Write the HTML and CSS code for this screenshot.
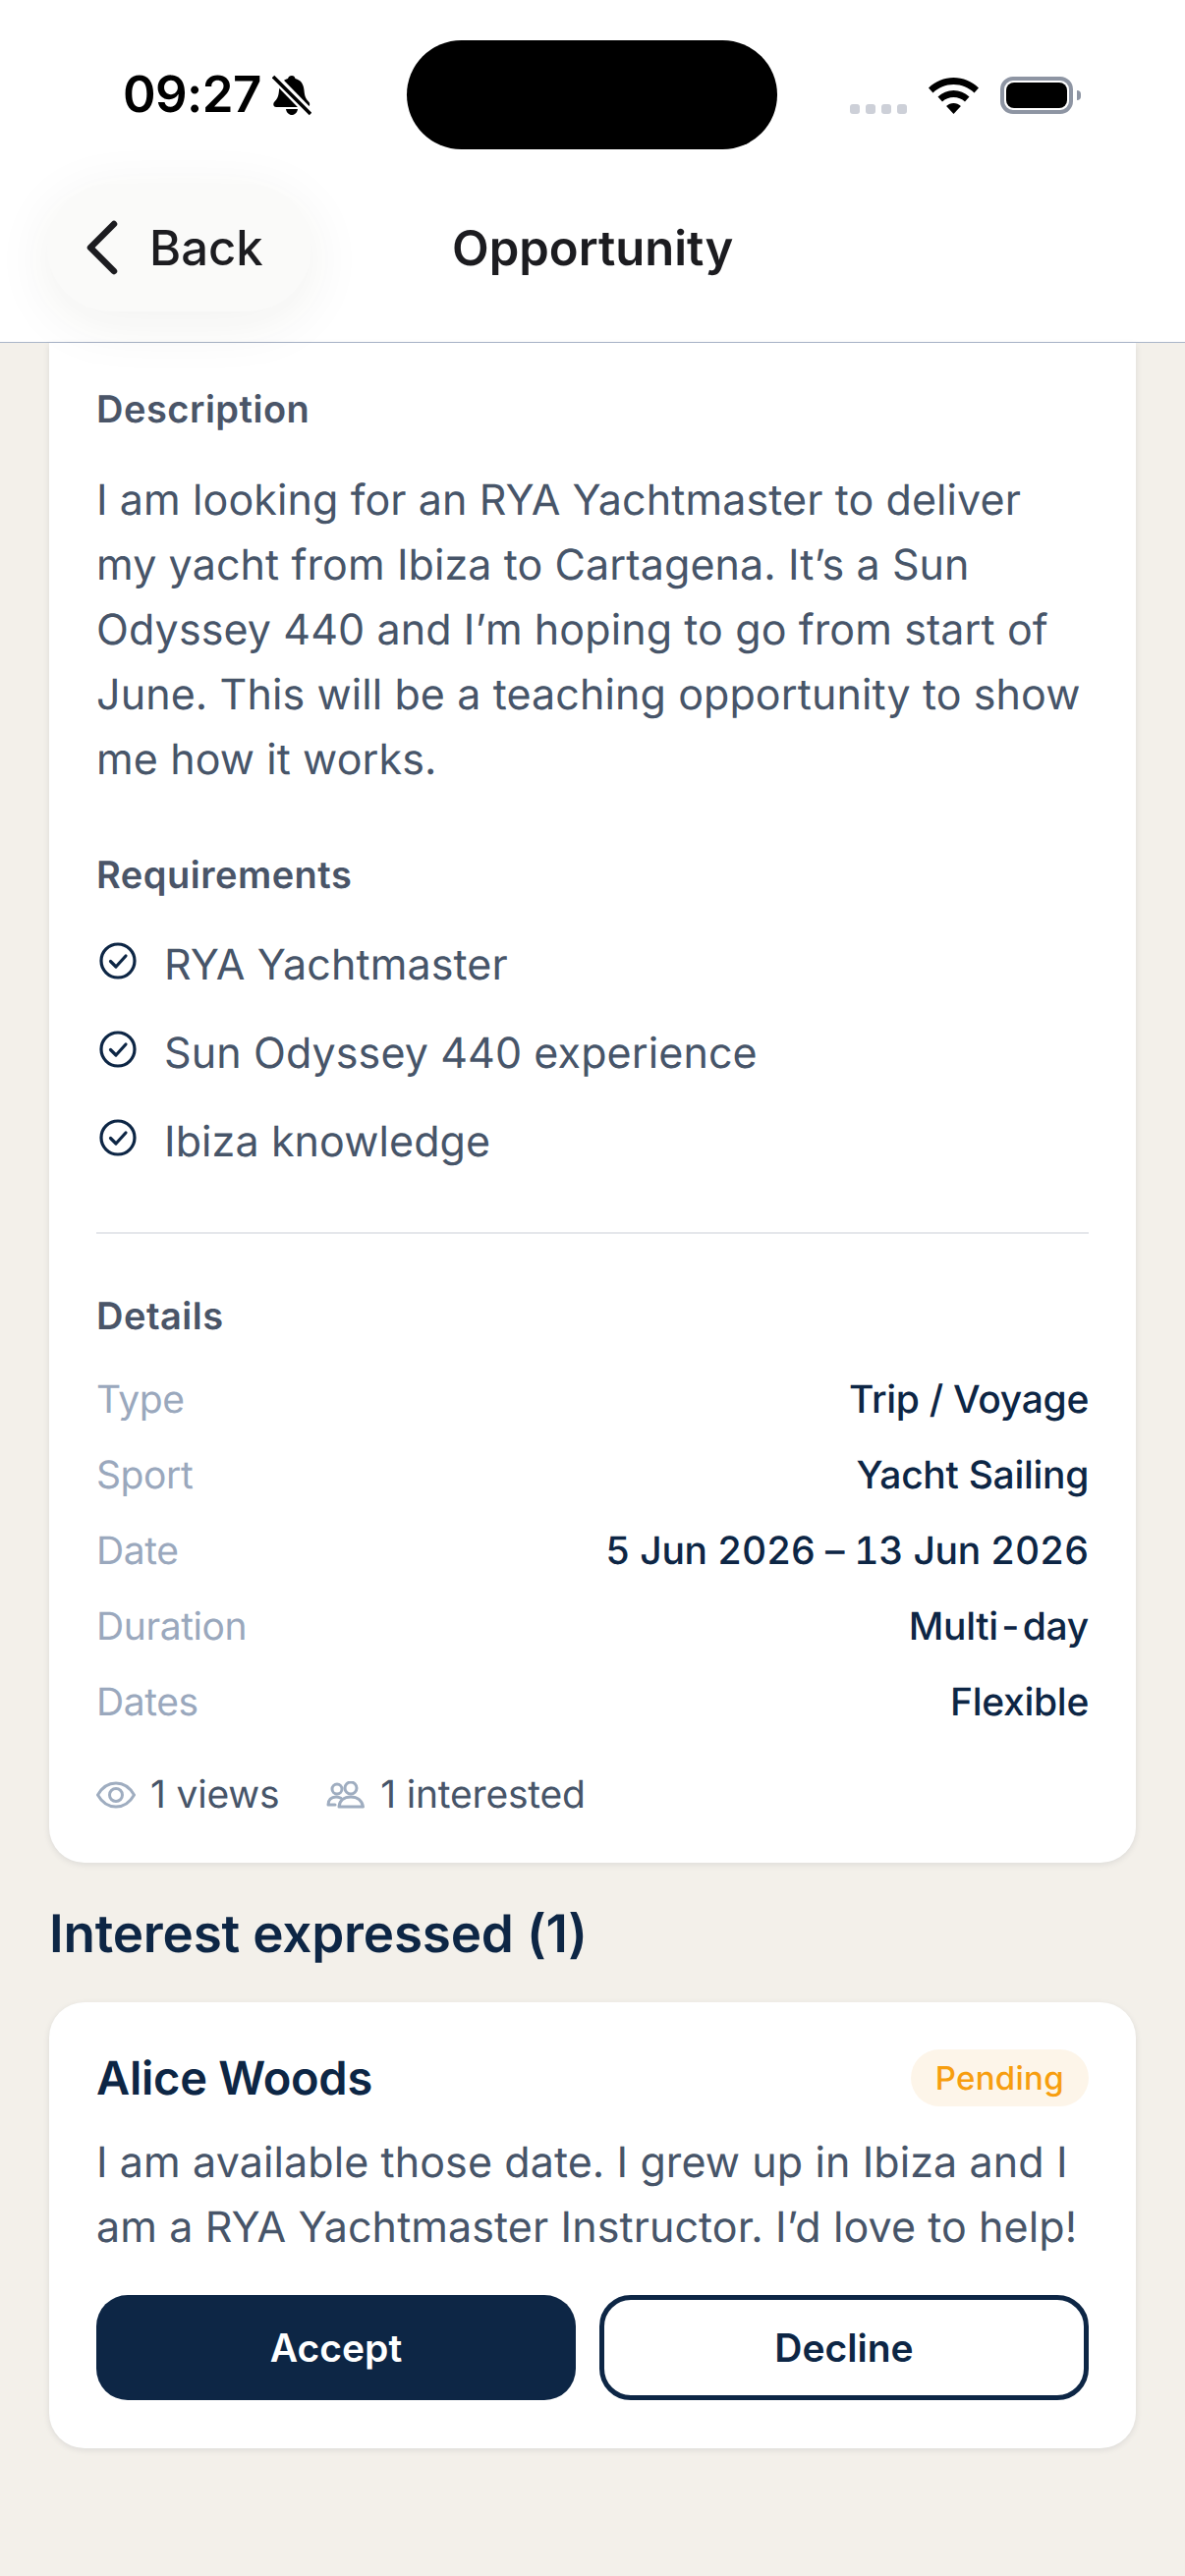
FILE: index.html
```html
<!DOCTYPE html>
<html lang="en">
<head>
    <meta charset="UTF-8">
    <meta name="viewport" content="width=device-width, initial-scale=1.0">
    <title>Opportunity</title>
    <link rel="stylesheet" href="styles.css">
</head>
<body>
    <!-- Status bar and title -->
    <header class="top">
        <div class="status-bar">
            <div class="status-left">
                <span class="clock">09:27</span>
                <svg class="bell" viewBox="0 0 40 42">
                    <path d="M20 1c2 0 3 1 3.500 3 6 1.500 8.500 6 9 12 .4 6 2 9 5 12 1.500 2 .5 5-2 5H4c-2.500 0-3.500-3-2-5 3-3 4.600-6 5-12 .5-6 3-10.500 9-12C16.500 2 18 1 20 1z"/>
                    <path d="M14 35h12c-.5 3.500-3 6-6 6s-5.500-2.500-6-6z"/>
                    <path class="bell-cut" d="M1 1l38 39" />
                    <path class="bell-line" d="M1 2l38 38" />
                </svg>
            </div>
            <div class="island"></div>
            <div class="status-right">
                <div class="signal"><i></i><i></i><i></i><i></i></div>
                <svg class="wifi" viewBox="0 0 51 37">
                    <path d="M25.500 0C35 0 44 3.800 51 10.500l-4.500 5C41 10.200 33.500 7 25.500 7S10 10.200 4.500 15.500L0 10.500C7 3.800 16 0 25.500 0z"/>
                    <path d="M25.500 13c6 0 11.500 2.300 16 6.500L37 24.500c-3-2.900-7.200-4.500-11.500-4.500S17 21.600 14 24.500l-4.500-5C14 15.300 19.500 13 25.500 13z"/>
                    <path d="M25.500 26c2.800 0 5.300 1 7.400 2.900L25.500 37l-7.400-8.100c2.100-1.900 4.600-2.900 7.400-2.900z"/>
                </svg>
                <div class="battery"><div class="battery-fill"></div></div>
            </div>
        </div>
        <div class="nav-row">
            <button class="back-btn">
                <svg class="chevron" viewBox="0 0 34 56"><path d="M30 4L6 28l24 24"/></svg>
                <span>Back</span>
            </button>
            <h1 class="page-title">Opportunity</h1>
        </div>
    </header>

    <main class="content">
        <!-- Opportunity card -->
        <section class="card card-main">
            <h2 class="label">Description</h2>
            <p class="body-text">I am looking for an RYA Yachtmaster to deliver my yacht from Ibiza to Cartagena. It’s a Sun Odyssey 440 and I’m hoping to go from start of June. This will be a teaching opportunity to show me how it works.</p>

            <h2 class="label label-req">Requirements</h2>
            <ul class="req-list">
                <li>
                    <svg class="check" viewBox="0 0 38 38"><circle cx="19" cy="19" r="17"/><path d="M11.500 19.500l5.500 5.500 10-11"/></svg>
                    <span>RYA Yachtmaster</span>
                </li>
                <li>
                    <svg class="check" viewBox="0 0 38 38"><circle cx="19" cy="19" r="17"/><path d="M11.500 19.500l5.500 5.500 10-11"/></svg>
                    <span>Sun Odyssey 440 experience</span>
                </li>
                <li>
                    <svg class="check" viewBox="0 0 38 38"><circle cx="19" cy="19" r="17"/><path d="M11.500 19.500l5.500 5.500 10-11"/></svg>
                    <span>Ibiza knowledge</span>
                </li>
            </ul>

            <div class="divider"></div>

            <h2 class="label">Details</h2>
            <dl class="details">
                <div class="detail-row"><dt>Type</dt><dd>Trip / Voyage</dd></div>
                <div class="detail-row"><dt>Sport</dt><dd>Yacht Sailing</dd></div>
                <div class="detail-row"><dt>Date</dt><dd>5 Jun 2026 – 13 Jun 2026</dd></div>
                <div class="detail-row"><dt>Duration</dt><dd>Multi-day</dd></div>
                <div class="detail-row"><dt>Dates</dt><dd>Flexible</dd></div>
            </dl>

            <div class="stats">
                <div class="stat">
                    <svg class="stat-icon" viewBox="0 0 40 28"><path d="M1.500 14C6 6 12.500 2 20 2s14 4 18.500 12C34 22 27.500 26 20 26S6 22 1.500 14z"/><circle cx="20" cy="14" r="6.500"/></svg>
                    <span>1 views</span>
                </div>
                <div class="stat">
                    <svg class="stat-icon" viewBox="0 0 40 28"><circle cx="11" cy="8" r="5"/><circle cx="25" cy="7" r="6"/><path d="M13 26c.5-6 5-10 12-10s11.500 4 12.500 10z"/><path d="M9 24H2c0-5 3-8 8-8 2 0 3.500.4 5 1.300"/></svg>
                    <span>1 interested</span>
                </div>
            </div>
        </section>

        <h2 class="section-title">Interest expressed (1)</h2>

        <!-- Interest card -->
        <section class="card card-interest">
            <div class="interest-head">
                <span class="person">Alice Woods</span>
                <span class="badge">Pending</span>
            </div>
            <p class="body-text">I am available those date. I grew up in Ibiza and I am a RYA Yachtmaster Instructor. I’d love to help!</p>
            <div class="actions">
                <button class="btn btn-accept">Accept</button>
                <button class="btn btn-decline">Decline</button>
            </div>
        </section>
    </main>
</body>
</html>
```

FILE: styles.css
```css
/* Base */
* {
    box-sizing: border-box;
}

body {
    margin: 0;
    height: 2622px;
    overflow: hidden;
    font-family: Inter, "Liberation Sans", sans-serif;
    text-rendering: geometricPrecision;
    background-color: #f3f0ea;
    color: #475569;
}

h1, h2, p, ul, dl, dd {
    margin: 0;
    padding: 0;
}

/* Header */
.top {
    height: 349px;
    background-color: #ffffff;
    border-bottom: 1px solid #aab5c8;
}

.status-bar {
    display: grid;
    grid-template-columns: 414px 377px 1fr;
    height: 187px;
    padding-top: 41px;
}

.status-left {
    display: flex;
    align-items: center;
    gap: 11px;
    height: 110px;
    padding-left: 125px;
}

.clock {
    font-size: 51px;
    font-weight: 600;
    letter-spacing: -0.6px;
    color: #000000;
}

.bell {
    width: 40px;
    height: 42px;
    margin-top: 2px;
}

.bell path {
    fill: #000000;
}

.bell .bell-cut {
    fill: none;
    stroke: #ffffff;
    stroke-width: 9;
}

.bell .bell-line {
    fill: none;
    stroke: #000000;
    stroke-width: 3.500;
}

.island {
    height: 111px;
    background-color: #000000;
    border-radius: 56px;
}

.status-right {
    display: flex;
    align-items: flex-end;
    height: 75px;
    padding-left: 74px;
}

.signal {
    display: flex;
    gap: 6px;
    margin-right: 22px;
}

.signal i {
    width: 10px;
    height: 10px;
    border-radius: 3px;
    background-color: #cdd0d8;
}

.wifi {
    width: 51px;
    height: 37px;
    margin-right: 22px;
}

.battery {
    position: relative;
    width: 74px;
    height: 38px;
    padding: 2px;
    border: 4px solid #8e95a3;
    border-radius: 13px;
}

.battery::after {
    content: "";
    position: absolute;
    right: -12px;
    top: 10px;
    width: 4px;
    height: 10px;
    background-color: #8e95a3;
    border-radius: 0 4px 4px 0;
}

.battery-fill {
    height: 100%;
    background-color: #000000;
    border-radius: 8px;
}

.nav-row {
    display: flex;
    align-items: flex-start;
    padding-left: 48px;
}

.back-btn {
    display: flex;
    align-items: center;
    gap: 32px;
    width: 269px;
    height: 130px;
    padding: 0 0 0 38px;
    border: none;
    border-radius: 65px;
    background-color: #fafaf9;
    box-shadow: 0 12px 60px rgba(60, 50, 30, 0.07);
    font-family: inherit;
    font-size: 49px;
    font-weight: 500;
    color: #1c1c20;
}

.chevron {
    width: 34px;
    height: 56px;
    fill: none;
    stroke: #1c1c20;
    stroke-width: 6.500;
    stroke-linecap: round;
    stroke-linejoin: round;
}

.page-title {
    margin-left: 143px;
    line-height: 132px;
    font-size: 49px;
    font-weight: 600;
    color: #1c1c20;
}

/* Content */
.content {
    padding: 0 50px;
}

.card {
    background-color: #ffffff;
    border-radius: 36px;
    box-shadow: 0 2px 6px rgba(30, 40, 60, 0.1);
    padding-left: 48px;
    padding-right: 48px;
}

.card-main {
    height: 1547px;
    padding-top: 43px;
    border-radius: 0 0 36px 36px;
}

.label {
    font-size: 38px;
    line-height: 50px;
    font-weight: 600;
    letter-spacing: 0.5px;
    color: #4a5568;
}

.label-req {
    margin-top: 60px;
}

.body-text {
    font-size: 43px;
    line-height: 66px;
    letter-spacing: 0.1px;
    color: #475569;
}

.card-main .body-text {
    margin-top: 34px;
}

.req-list {
    list-style: none;
    margin-top: 21px;
}

.req-list li {
    display: flex;
    align-items: center;
    height: 90px;
    font-size: 43px;
    letter-spacing: 0.1px;
}

.check {
    width: 38px;
    height: 38px;
    margin: -8px 28px 0 3px;
    fill: none;
    stroke: #0d2645;
    stroke-width: 3.200;
    stroke-linecap: round;
    stroke-linejoin: round;
}

.divider {
    height: 2px;
    margin-top: 47px;
    background-color: #e5e7eb;
}

.card-main .divider + .label {
    margin-top: 59px;
}

.details {
    margin-top: 21px;
}

.detail-row {
    display: flex;
    justify-content: space-between;
    align-items: center;
    height: 77px;
    font-size: 39px;
}

.detail-row dt {
    letter-spacing: -0.4px;
    color: #9aa8bd;
}

.detail-row dd {
    font-weight: 500;
    font-feature-settings: "calt" 0, "tnum" 1;
    letter-spacing: -0.3px;
    color: #0d2645;
}

.stats {
    display: flex;
    gap: 48px;
    margin-top: 20px;
    padding-top: 12px;
    font-size: 39px;
    letter-spacing: -0.2px;
    color: #475569;
}

.stat {
    display: flex;
    align-items: center;
    gap: 15px;
}

.stat-icon {
    width: 40px;
    height: 28px;
    fill: none;
    stroke: #9fadc0;
    stroke-width: 3;
    stroke-linecap: round;
    stroke-linejoin: round;
}

.section-title {
    margin: 38px 0 36px;
    font-size: 53px;
    line-height: 68px;
    font-weight: 600;
    letter-spacing: -0.2px;
    color: #0d2645;
}

.card-interest {
    height: 454px;
    padding-top: 48px;
}

.interest-head {
    display: flex;
    justify-content: space-between;
    align-items: center;
    height: 58px;
}

.person {
    font-size: 47px;
    font-weight: 600;
    letter-spacing: -0.25px;
    color: #0d2645;
}

.badge {
    display: flex;
    align-items: center;
    height: 58px;
    padding: 0 25px;
    border-radius: 29px;
    background-color: #fdf5e9;
    font-size: 33px;
    font-weight: 500;
    letter-spacing: 0.3px;
    color: #f79e0f;
}

.card-interest .body-text {
    margin-top: 24px;
}

.actions {
    display: flex;
    gap: 24px;
    margin-top: 36px;
}

.btn {
    flex: 1;
    height: 107px;
    border-radius: 32px;
    font-family: inherit;
    font-size: 39px;
    font-weight: 600;
}

.btn-accept {
    background-color: #0d2645;
    border: none;
    color: #ffffff;
}

.btn-decline {
    background-color: #ffffff;
    border: 5px solid #0d2645;
    color: #0d2645;
}
```
